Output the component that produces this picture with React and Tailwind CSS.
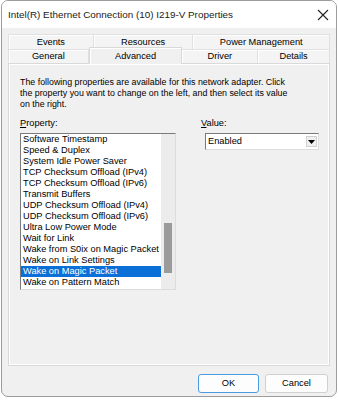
import React from "react";

const font = { fontFamily: '"Liberation Sans", Arial, sans-serif' };

const items = [
  "Software Timestamp",
  "Speed & Duplex",
  "System Idle Power Saver",
  "TCP Checksum Offload (IPv4)",
  "TCP Checksum Offload (IPv6)",
  "Transmit Buffers",
  "UDP Checksum Offload (IPv4)",
  "UDP Checksum Offload (IPv6)",
  "Ultra Low Power Mode",
  "Wait for Link",
  "Wake from S0ix on Magic Packet",
  "Wake on Link Settings",
  "Wake on Magic Packet",
  "Wake on Pattern Match",
];

const Tab = ({ label, w, active }) => (
  <div
    className={
      active
        ? "relative z-10 -mt-[2px] h-[17px] -mb-[1px] flex items-center justify-center border border-b-0 border-[#d9d9d9] bg-[#f0f0f0] shadow-[inset_1px_1px_0_#fff]"
        : "flex items-center justify-center border-t border-r border-[#e0e0e0] bg-[#f4f4f4] shadow-[inset_1px_1px_0_#fff]"
    }
    style={{ width: w }}
  >
    {label}
  </div>
);

export default function App() {
  return (
    <div className="w-[339px] h-[400px] bg-white text-black text-[9.25px] leading-[11px]" style={font}>
      <div className="ml-px w-[336px] h-[397px] flex flex-col border border-[#9c9c9c] rounded-[7px] overflow-hidden bg-[#f0f0f0]">
        {/* title bar */}
        <div className="h-[27px] shrink-0 flex items-center justify-between bg-white pl-[6px] pr-[6px]">
          <span className="text-[9.9px] text-[#1a1a1a]">Intel(R) Ethernet Connection (10) I219-V Properties</span>
          <svg width="12" height="12" viewBox="0 0 12 12" className="mr-[1px]">
            <path d="M1 1 L11 11 M11 1 L1 11" stroke="#222" strokeWidth="1.1" fill="none" />
          </svg>
        </div>

        <div className="flex-1 flex flex-col px-[6px] pt-[6px]">
          {/* tabs */}
          <div className="flex h-[15px] border-l border-[#e0e0e0] w-[322px]">
            <Tab label="Events" w={85} />
            <Tab label="Resources" w={100} />
            <Tab label="Power Management" w={137} />
          </div>
          <div className="flex h-[14px] border-l border-[#e0e0e0] w-[322px]">
            <Tab label="General" w={80} />
            <Tab label="Advanced" w={94} active />
            <Tab label="Driver" w={76} />
            <Tab label="Details" w={72} />
          </div>

          {/* panel */}
          <div className="w-[322px] h-[303px] border border-[#d9d9d9] shadow-[inset_1px_1px_0_#fff,inset_-1px_-1px_0_#fff] pl-[11px] pt-[13px]">
            <p className="w-[272px] text-[8.85px]">
              The following properties are available for this network adapter. Click the property you want to change on the left, and then select its value on the right.
            </p>

            <div className="flex mt-[8px]">
              <div className="w-[181px]">
                <div>
                  <span className="underline underline-offset-1">P</span>roperty:
                </div>
                <div className="mt-[4px] w-[156px] h-[157px] flex border border-t-[#7a7a7a] border-l-[#7a7a7a] border-r-[#dcdcdc] border-b-[#dcdcdc] bg-white">
                  <div className="flex-1">
                    {items.map((it) => (
                      <div
                        key={it}
                        className={
                          it === "Wake on Magic Packet"
                            ? "h-[11px] pl-[2px] bg-[#0a6fd6] text-white"
                            : "h-[11px] pl-[2px]"
                        }
                      >
                        {it}
                      </div>
                    ))}
                  </div>
                  <div className="w-[14px] bg-[#ececec] pt-[89px] pl-[3px]">
                    <div className="w-[8px] h-[50px] bg-[#9b9b9b]" />
                  </div>
                </div>
              </div>

              <div>
                <div>
                  <span className="underline underline-offset-1">V</span>alue:
                </div>
                <div className="mt-[4px] ml-[4px] w-[114px] h-[17px] flex items-center border border-t-[#7a7a7a] border-l-[#7a7a7a] border-r-[#dcdcdc] border-b-[#dcdcdc] bg-white pl-[2px] pr-[1px]">
                  <span className="flex-1">Enabled</span>
                  <div className="w-[11px] h-[11px] flex items-center justify-center bg-[#f0f0f0] border border-[#d0d0d0]">
                    <svg width="7" height="4" viewBox="0 0 7 4">
                      <path d="M0 0 H7 L3.5 4 Z" fill="#000" />
                    </svg>
                  </div>
                </div>
              </div>
            </div>
          </div>

          {/* buttons */}
          <div className="flex justify-end gap-[6px] mt-[8px] pr-[2px]">
            <button className="w-[61px] h-[19px] rounded-[3px] border border-[#4a9be0] bg-[#fdfdfd] text-[9.25px]" style={font}>
              OK
            </button>
            <button className="w-[63px] h-[19px] rounded-[3px] border border-[#d0d0d0] bg-[#fdfdfd] text-[9.25px]" style={font}>
              Cancel
            </button>
          </div>
        </div>
      </div>
    </div>
  );
}
